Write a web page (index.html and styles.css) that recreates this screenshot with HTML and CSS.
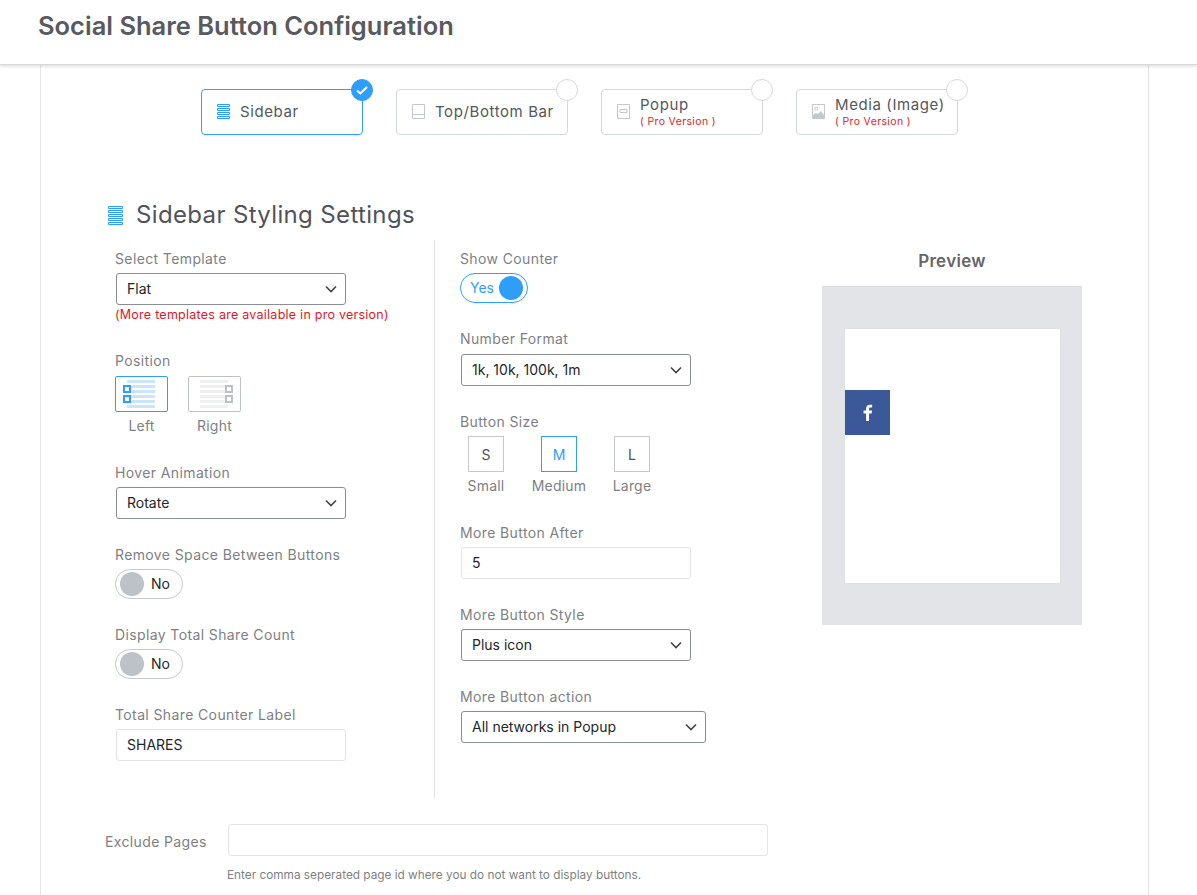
FILE: index.html
```html
<!DOCTYPE html>
<html lang="en">
<head>
<meta charset="utf-8">
<title>Social Share Button Configuration</title>
<link rel="stylesheet" href="styles.css">
</head>
<body>
<header class="topbar"><h1>Social Share Button Configuration</h1></header>
<main class="panel">
  <div class="tabs">
    <div class="tab tab-active tab-w1">
      <svg class="tab-icon" width="14" height="16" viewBox="0 0 14 16"><path d="M0.5 0.5h12v2h-12zM0.5 4.500h12v2h-12zM0.5 8.500h12v2h-12zM0.5 12.500h12v2h-12z" fill="none" stroke="#2e9efb"/></svg>
      <div class="tab-text"><span class="tab-name">Sidebar</span></div>
      <span class="badge badge-on"><svg width="14" height="12" viewBox="0 0 14 12"><path d="M2 6.500l3.300 3L12 3" fill="none" stroke="#fff" stroke-width="2"/></svg></span>
    </div>
    <div class="tab tab-w2">
      <svg class="tab-icon" width="14" height="16" viewBox="0 0 14 16"><path d="M0.5 0.5h12v14h-12zM0 10.500h13" fill="none" stroke="#c4c8cc"/></svg>
      <div class="tab-text"><span class="tab-name">Top/Bottom Bar</span></div>
      <span class="badge"></span>
    </div>
    <div class="tab tab-w1">
      <svg class="tab-icon" width="14" height="16" viewBox="0 0 14 16"><path d="M0.5 0.5h12v14h-12zM3 5.500h7v3h-7z" fill="none" stroke="#c4c8cc"/></svg>
      <div class="tab-text"><span class="tab-name">Popup</span><span class="tab-pro">( Pro Version )</span></div>
      <span class="badge"></span>
    </div>
    <div class="tab tab-w1">
      <svg class="tab-icon" width="14" height="16" viewBox="0 0 14 16"><path d="M0.5 0.5h12v14h-12z" fill="none" stroke="#c4c8cc"/><rect x="3" y="3.500" width="2.500" height="2.500" fill="none" stroke="#c4c8cc" stroke-width="0.8"/><path d="M1 14v-3l3-2 2 1 3-3 3 4v3z" fill="#c4c8cc"/></svg>
      <div class="tab-text"><span class="tab-name">Media (Image)</span><span class="tab-pro">( Pro Version )</span></div>
      <span class="badge"></span>
    </div>
  </div>

  <h2 class="section-title">
    <svg width="15" height="19" viewBox="0 0 15 19"><path d="M0.500 0.500h14v2h-14zM0.500 4.500h14v2h-14zM0.500 8.500h14v2h-14zM0.500 12.500h14v2h-14zM0.500 16.500h14v2h-14z" fill="none" stroke="#2e9efb"/></svg>
    Sidebar Styling Settings
  </h2>

  <div class="columns">
    <section class="col col-left">
      <div class="field f-template">
        <label class="label">Select Template</label>
        <select class="control w230"><option>Flat</option></select>
        <p class="note">(More templates are available in pro version)</p>
      </div>
      <div class="field f-position">
        <label class="label">Position</label>
        <div class="pos-row">
          <div class="pos-item">
            <div class="pos-box pos-on">
              <svg width="51" height="34" viewBox="0 0 51 34"><path d="M11 4.500h28M11 9.500h28M11 14.500h28M11 19.500h28M11 24.500h28M11 29.500h28" stroke="#c9e5fd" stroke-width="3"/><path d="M8 9h6v6h-6zM8 19h6v6h-6z" fill="#fff" stroke="#2e9efb" stroke-width="2"/></svg>
            </div>
            <span class="caption">Left</span>
          </div>
          <div class="pos-item">
            <div class="pos-box">
              <svg width="51" height="34" viewBox="0 0 51 34"><path d="M11 4.500h28M11 9.500h28M11 14.500h28M11 19.500h28M11 24.500h28M11 29.500h28" stroke="#eeeff0" stroke-width="3"/><path d="M37 9h6v6h-6zM37 19h6v6h-6z" fill="#fff" stroke="#bdc1c6" stroke-width="2"/></svg>
            </div>
            <span class="caption">Right</span>
          </div>
        </div>
      </div>
      <div class="field f-hover">
        <label class="label">Hover Animation</label>
        <select class="control w230"><option>Rotate</option></select>
      </div>
      <div class="field f-switch">
        <label class="label">Remove Space Between Buttons</label>
        <div class="switch"><span class="knob"></span><span>No</span></div>
      </div>
      <div class="field f-switch">
        <label class="label">Display Total Share Count</label>
        <div class="switch"><span class="knob"></span><span>No</span></div>
      </div>
      <div class="field f-switch">
        <label class="label">Total Share Counter Label</label>
        <input class="control text-input w230" value="SHARES">
      </div>
    </section>

    <section class="col col-mid">
      <div class="field">
        <label class="label">Show Counter</label>
        <div class="switch switch-on"><span>Yes</span><span class="knob"></span></div>
      </div>
      <div class="field f-mid-a">
        <label class="label label-tight">Number Format</label>
        <select class="control w230"><option>1k, 10k, 100k, 1m</option></select>
      </div>
      <div class="field f-mid-b">
        <label class="label">Button Size</label>
        <div class="size-row">
          <div class="size-item"><span class="size-box">S</span><span class="caption">Small</span></div>
          <div class="size-item"><span class="size-box size-on">M</span><span class="caption">Medium</span></div>
          <div class="size-item"><span class="size-box">L</span><span class="caption">Large</span></div>
        </div>
      </div>
      <div class="field f-mid-c">
        <label class="label">More Button After</label>
        <input class="control text-input w230" value="5">
      </div>
      <div class="field f-mid-c">
        <label class="label">More Button Style</label>
        <select class="control w230"><option>Plus icon</option></select>
      </div>
      <div class="field f-mid-c">
        <label class="label">More Button action</label>
        <select class="control w245"><option>All networks in Popup</option></select>
      </div>
    </section>

    <aside class="preview">
      <h3 class="preview-title">Preview</h3>
      <div class="preview-frame">
        <div class="preview-page">
          <span class="fb"><svg width="10" height="17" viewBox="1 0 9 16"><path d="M6.500 16V9h2.400l.4-2.800H6.500V4.500c0-.8.300-1.300 1.400-1.300h1.500V.7C9.100.7 8.300.6 7.300.6 5.200.6 3.700 1.900 3.700 4.200v2H1.300V9h2.400v7z" fill="#fff"/></svg></span>
        </div>
      </div>
    </aside>
  </div>

  <div class="exclude">
    <label class="exclude-label">Exclude Pages</label>
    <div class="exclude-body">
      <input class="control text-input w540">
      <p class="hint">Enter comma seperated page id where you do not want to display buttons.</p>
    </div>
  </div>
</main>
</body>
</html>
```
FILE: styles.css
```css
* { box-sizing: border-box; }
html, body { margin: 0; height: 895px; overflow: hidden; background: #fff; }
body { font-family: "Inter", "Liberation Sans", sans-serif; color: #50535a; }

.topbar { height: 65px; padding: 8px 38px 0; background: #fff; border-bottom: 1px solid #d8d9db; box-shadow: 0 1px 4px rgba(0,0,0,.16); position: relative; }
.topbar h1 { margin: 0; font-size: 25.500px; line-height: 36px; font-weight: 600; color: #585a5f; }

.panel { width: 1109px; height: 830px; margin-left: 40px; border-left: 1px solid #e5e6e8; border-right: 1px solid #e5e6e8; background: #fff; padding-top: 24px; }

.tabs { display: flex; gap: 33px; padding-left: 160px; }
.tab { position: relative; height: 46px; display: flex; align-items: center; gap: 9px; padding-left: 15px; border: 1px solid #d5d8db; border-radius: 4px; background: #fff; }
.tab-w1 { width: 162px; }
.tab-w2 { width: 172px; }
.tab-active { border-color: #2e9efb; }
.tab-text { display: flex; flex-direction: column; }
.tab-name { font-size: 15px; line-height: 18px; letter-spacing: .6px; color: #55575c; white-space: nowrap; }
.tab-pro { margin-top: 2px; font-size: 10.500px; line-height: 12px; letter-spacing: .35px; color: #e3222c; }
.badge { position: absolute; top: -11px; right: -11px; width: 22px; height: 22px; border-radius: 50%; border: 1px solid #d5d8db; background: #fff; display: flex; align-items: center; justify-content: center; }
.badge-on { background: #2e9efb; border-color: #2e9efb; }

.section-title { display: flex; align-items: center; gap: 13px; margin: 67px 0 0 67px; height: 26px; font-size: 24px; line-height: 26px; font-weight: 400; letter-spacing: .35px; color: #50535a; }

.columns { display: flex; margin-top: 12px; padding-left: 67px; }
.col { height: 558px; }
.col-left { width: 327px; padding: 10px 0 0 7px; border-right: 1px solid #e0e1e3; }
.col-mid { width: 387px; padding: 10px 0 0 25px; }

.field { display: block; }
.label { display: block; font-size: 14px; line-height: 18px; letter-spacing: .38px; color: #7d7f84; margin-bottom: 5px; }
.label-tight { margin-bottom: 6px; }
.note { margin: 3px 0 0 0; font-size: 12.500px; line-height: 14px; letter-spacing: .25px; color: #e8141f; }

.control { display: block; height: 32px; margin-left: 1px; padding: 0 10px 2px; border: 1px solid #8a8d92; border-radius: 3px; font: 14px "Inter", "Liberation Sans", sans-serif; color: #23262b; background: #fff; }
select.control { appearance: none; background-image: url("data:image/svg+xml,%3Csvg xmlns='http://www.w3.org/2000/svg' width='12' height='8'%3E%3Cpath d='M1 1.500l5 5 5-5' fill='none' stroke='%23444' stroke-width='1.600'/%3E%3C/svg%3E"); background-repeat: no-repeat; background-position: right 8px center; }
.text-input { border-color: #e2e4e7; }
.w230 { width: 230px; }
.w245 { width: 245px; }
.w540 { width: 540px; margin-left: 0; }

.f-template { height: 102px; }
.f-position { height: 112px; }
.f-hover { height: 82px; }
.f-switch { height: 80px; }

.pos-row { display: flex; gap: 20px; margin-top: 6px; }
.pos-item { display: flex; flex-direction: column; align-items: center; width: 53px; }
.pos-box { width: 53px; height: 36px; border: 1px solid #bdc1c6; border-radius: 2px; display: flex; }
.pos-on { border-color: #2e9efb; }
.caption { margin-top: 5px; font-size: 14px; line-height: 18px; letter-spacing: .2px; color: #7d7f84; }

.switch { width: 68px; height: 30px; padding: 0 4px 1px; display: flex; align-items: center; gap: 7px; border: 1px solid #c5c8cc; border-radius: 15px; font-size: 14px; color: #23262b; }
.knob { width: 24px; height: 24px; margin-top: 1px; border-radius: 50%; background: #bdc1c8; }
.switch-on { border-color: #2e9efb; color: #2e9efb; justify-content: flex-end; gap: 5px; }
.switch-on .knob { background: #2e9efb; }

.f-mid-a { margin-top: 27px; height: 65px; }
.f-mid-b { margin-top: 18px; height: 92px; }
.f-mid-c { height: 82px; }
.f-mid-b + .f-mid-c { margin-top: 19px; }

.size-row { display: flex; gap: 31px; margin-left: 8px; }
.size-item { display: flex; flex-direction: column; align-items: center; width: 48px; margin-left: -6px; }
.size-box { width: 36px; height: 36px; display: flex; align-items: center; justify-content: center; border: 1px solid #c5c8cc; font-size: 14px; color: #50535a; }
.size-on { border-color: #2e9efb; color: #2e9efb; }

.preview { width: 260px; margin-top: 10px; }
.preview-title { margin: 0; text-align: center; font-size: 17px; line-height: 22px; font-weight: 600; letter-spacing: .3px; color: #666; }
.preview-frame { margin-top: 14px; width: 260px; height: 339px; padding: 41px 21px 0 22px; background: #e3e4e8; border-top: 1px solid #dcdde0; }
.preview-page { width: 217px; height: 256px; padding: 61px 0 0 0; background: #fff; border: 1px solid #dfe0e3; }
.fb { width: 45px; height: 45px; display: flex; align-items: center; justify-content: center; background: #3b5998; }

.exclude { display: flex; margin: 26px 0 0 64px; }
.exclude-label { width: 123px; font-size: 14px; line-height: 36px; letter-spacing: .36px; color: #7d7f84; }
.exclude-body { display: block; }
.hint { margin: 11px 0 0 -1px; font-size: 11.800px; line-height: 16px; color: #7d7f84; }
```
